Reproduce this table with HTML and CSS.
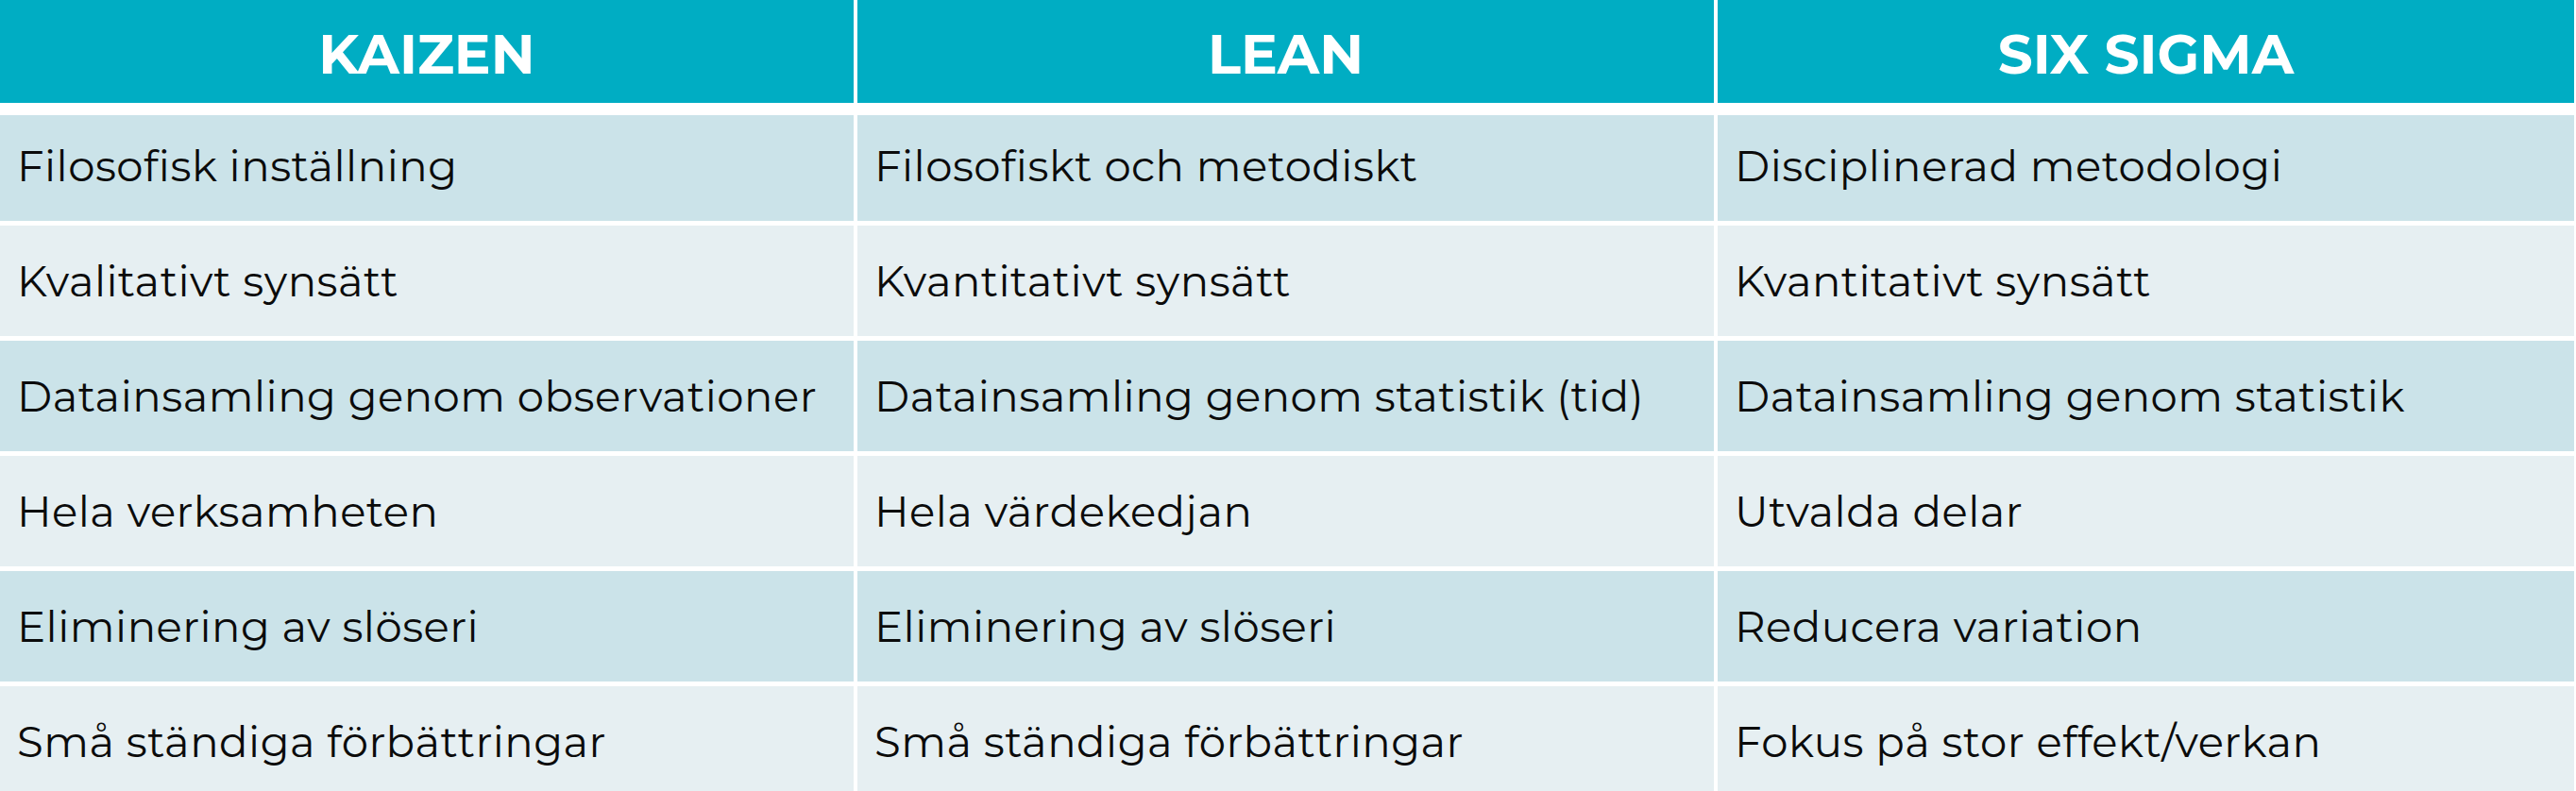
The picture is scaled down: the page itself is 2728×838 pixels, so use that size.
FILE: index.html
```html
<!DOCTYPE html>
<html lang="sv">
<head>
<meta charset="utf-8">
<title>Kaizen, Lean, Six Sigma</title>
<link rel="stylesheet" href="styles.css">
</head>
<body>
<div class="table">
  <div class="row head">
    <div class="cell">KAIZEN</div>
    <div class="cell">LEAN</div>
    <div class="cell">SIX SIGMA</div>
  </div>
  <div class="body">
    <div class="row dark first">
      <div class="cell">Filosofisk inställning</div>
      <div class="cell">Filosofiskt och metodiskt</div>
      <div class="cell">Disciplinerad metodologi</div>
    </div>
    <div class="row light">
      <div class="cell">Kvalitativt synsätt</div>
      <div class="cell">Kvantitativt synsätt</div>
      <div class="cell">Kvantitativt synsätt</div>
    </div>
    <div class="row dark">
      <div class="cell">Datainsamling genom observationer</div>
      <div class="cell">Datainsamling genom statistik (tid)</div>
      <div class="cell">Datainsamling genom statistik</div>
    </div>
    <div class="row light">
      <div class="cell">Hela verksamheten</div>
      <div class="cell">Hela värdekedjan</div>
      <div class="cell">Utvalda delar</div>
    </div>
    <div class="row dark">
      <div class="cell">Eliminering av slöseri</div>
      <div class="cell">Eliminering av slöseri</div>
      <div class="cell">Reducera variation</div>
    </div>
    <div class="row light last">
      <div class="cell">Små ständiga förbättringar</div>
      <div class="cell">Små ständiga förbättringar</div>
      <div class="cell">Fokus på stor effekt/verkan</div>
    </div>
  </div>
</div>
</body>
</html>
```

FILE: styles.css
```css
html, body {
  margin: 0;
  padding: 0;
  background: #ffffff;
}

body {
  width: 2728px;
  height: 838px;
  overflow: hidden;
  font-family: "Montserrat", "Open Sans", "Liberation Sans", sans-serif;
}

.table {
  width: 2726px;
  display: flex;
  flex-direction: column;
}

.row {
  display: grid;
  grid-template-columns: 904px 907px 907px;
  column-gap: 4px;
}

.head {
  height: 109px;
}

.head .cell {
  background: #00adc3;
  color: #ffffff;
  font-weight: 700;
  font-size: 58px;
  display: flex;
  align-items: center;
  justify-content: center;
  padding-top: 6px;
  box-sizing: border-box;
}

.body {
  margin-top: 13px;
  display: flex;
  flex-direction: column;
  gap: 5px;
}

.body .row {
  height: 117px;
}

.body .row.first {
  height: 112px;
}

.body .cell {
  display: flex;
  align-items: center;
  padding-left: 18px;
  font-size: 45px;
  color: #0b0b0b;
  letter-spacing: 0.5px;
  box-sizing: border-box;
}

.body .first .cell {
  padding-bottom: 5px;
}

.dark .cell {
  background: #cbe3e9;
}

.light .cell {
  background: #e6eff2;
}
```
